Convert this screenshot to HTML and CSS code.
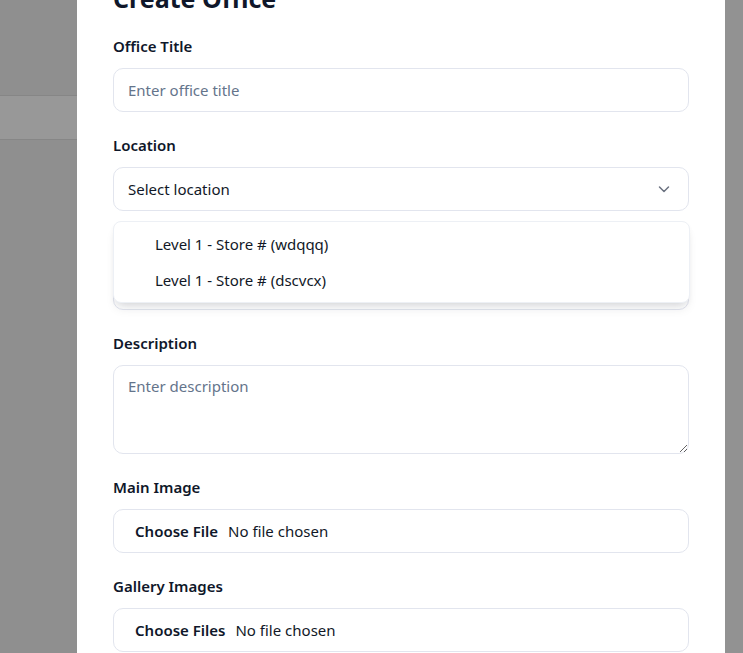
FILE: index.html
```html
<!DOCTYPE html>
<html lang="en">
<head>
<meta charset="utf-8">
<title>Create Office</title>
<link rel="stylesheet" href="styles.css">
</head>
<body>
<div class="screen">
  <div class="backdrop-page">
    <div class="bp-header"></div>
    <div class="bp-row"></div>
  </div>
  <div class="modal">
    <h2 class="modal-title">Create Office</h2>
    <form class="form">
      <div class="field">
        <label class="label">Office Title</label>
        <input class="input" type="text" placeholder="Enter office title">
      </div>
      <div class="field field-select">
        <label class="label">Location</label>
        <div class="select">
          <span class="select-value">Select location</span>
          <svg class="chevron" width="14" height="14" viewBox="0 0 14 14" fill="none"><path d="M2.5 5l4.5 4.5 4.5-4.5" stroke="#6b7280" stroke-width="1.5" stroke-linecap="round" stroke-linejoin="round"/></svg>
        </div>
        <ul class="options">
          <li class="option">Level 1 - Store # (wdqqq)</li>
          <li class="option">Level 1 - Store # (dscvcx)</li>
        </ul>
      </div>
      <div class="field">
        <label class="label label-covered">Category</label>
        <div class="input"></div>
      </div>
      <div class="field">
        <label class="label">Description</label>
        <textarea class="textarea" placeholder="Enter description"></textarea>
      </div>
      <div class="field">
        <label class="label">Main Image</label>
        <div class="file"><span class="file-btn">Choose File</span><span class="file-text">No file chosen</span></div>
      </div>
      <div class="field">
        <label class="label">Gallery Images</label>
        <div class="file"><span class="file-btn">Choose Files</span><span class="file-text">No file chosen</span></div>
      </div>
    </form>
  </div>
  <div class="right-gutter"></div>
</div>
</body>
</html>
```

FILE: styles.css
```css
* { box-sizing: border-box; }
html, body { margin: 0; height: 100%; overflow: hidden; }
body {
  font-family: "Noto Sans", "Open Sans", sans-serif;
  background: #8f8f8f;
  color: #0f172a;
}
.screen {
  display: grid;
  grid-template-columns: 77px 648px 1fr;
  height: 653px;
  overflow: hidden;
}
.backdrop-page { background: #8f8f8f; }
.bp-header { height: 96px; border-bottom: 1px solid #868686; }
.bp-row { height: 44px; background: #989898; border-bottom: 1px solid #868686; }
.right-gutter { background: #929292; }
.modal {
  background: #ffffff;
  padding: 0 36px;
  margin-top: -18px;
}
.modal-title {
  margin: 0 0 22px;
  font-size: 25px;
  line-height: 32px;
  font-weight: 700;
  color: #0f172a;
}
.form { display: flex; flex-direction: column; gap: 23px; }
.field { display: flex; flex-direction: column; }
.field-select { position: relative; }
.label {
  font-size: 15px;
  line-height: 20px;
  font-weight: 600;
  color: #0f172a;
  margin-bottom: 12px;
}
.label-covered { visibility: hidden; }
.input, .select, .file {
  height: 44px;
  border: 1px solid #e2e5ee;
  border-radius: 10px;
  background: #fff;
  font: inherit;
  font-size: 15px;
  padding: 0 14px;
  color: #111827;
  outline: none;
}
.input::placeholder, .textarea::placeholder { color: #64748b; }
.select {
  display: flex;
  align-items: center;
  justify-content: space-between;
  padding-right: 17px;
}
.chevron { display: block; }
.options {
  position: absolute;
  left: 0;
  right: -1px;
  top: 86px;
  margin: 0;
  padding: 4px 0;
  list-style: none;
  background: #fff;
  border: 1px solid #edf0f5;
  border-radius: 8px;
  box-shadow: 0 8px 12px -4px rgba(15, 23, 42, 0.12), 0 3px 6px -2px rgba(15, 23, 42, 0.08);
  z-index: 2;
}
.option {
  height: 36px;
  line-height: 36px;
  padding-left: 41px;
  font-size: 15px;
  color: #111827;
}
.textarea {
  height: 89px;
  border: 1px solid #e2e5ee;
  border-radius: 10px;
  font: inherit;
  font-size: 15px;
  padding: 10px 14px;
  color: #111827;
  outline: none;
  resize: vertical;
}
.file {
  display: flex;
  align-items: center;
  padding-left: 21px;
}
.file-btn { font-weight: 600; margin-right: 10px; color: #0f172a; }
.file-text { color: #111827; }
```
